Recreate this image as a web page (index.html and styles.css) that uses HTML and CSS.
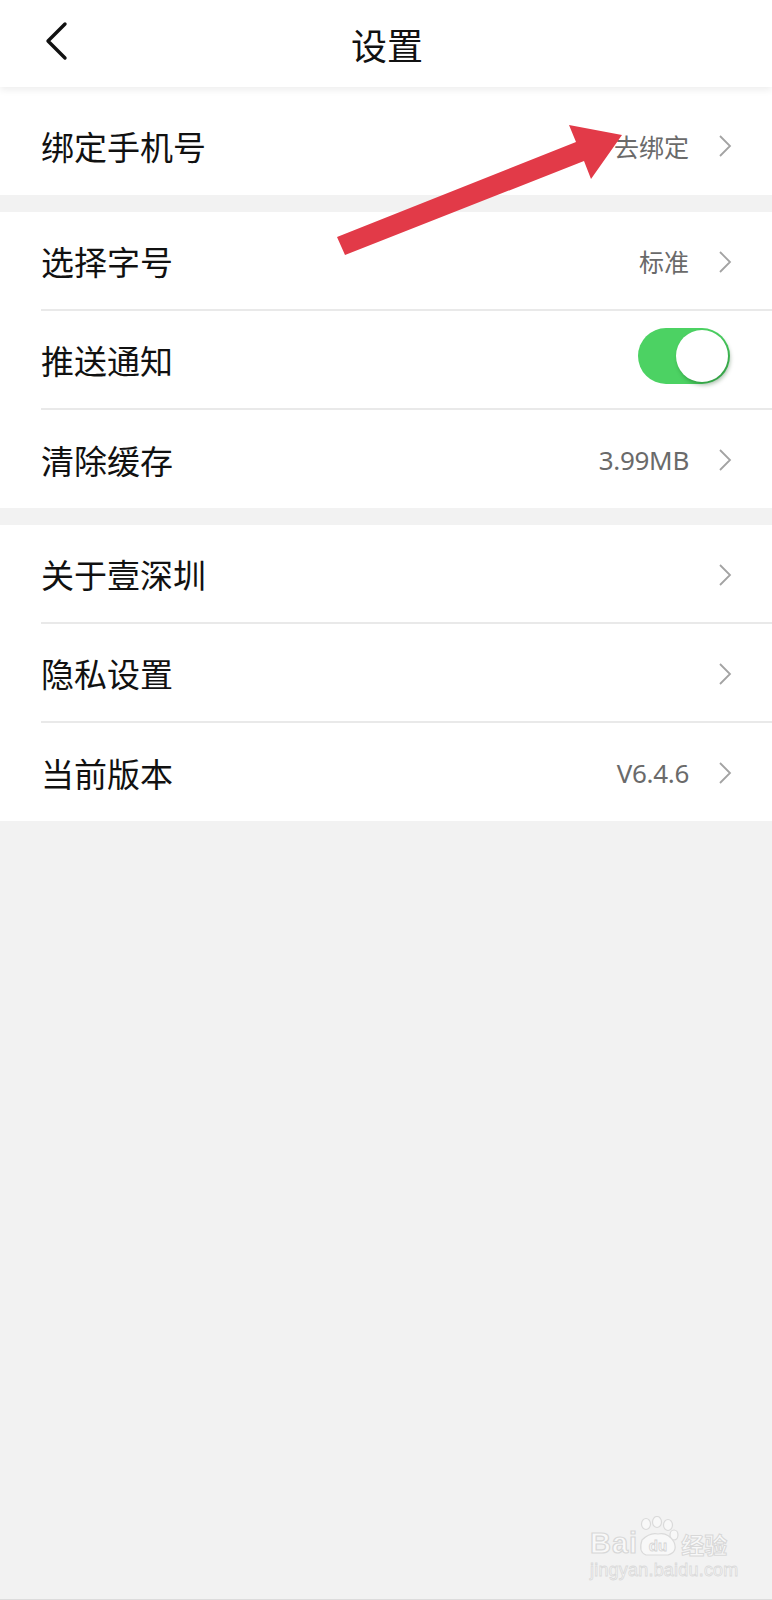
FILE: index.html
```html
<!DOCTYPE html>
<html lang="zh">
<head>
<meta charset="utf-8">
<title>设置</title>
<link rel="stylesheet" href="styles.css">
</head>
<body>
<div class="page">
  <header class="topbar">
    <span class="back">
      <svg width="26" height="40" viewBox="0 0 26 40"><polyline points="22,3 5,20 22,37" fill="none" stroke="#111" stroke-width="3.4" stroke-linecap="round" stroke-linejoin="round"/></svg>
    </span>
    <h1 class="title">设置</h1>
  </header>

  <section class="group">
    <div class="row row-first">
      <span class="label">绑定手机号</span>
      <span class="right"><span class="value">去绑定</span><svg class="chev" width="14" height="24" viewBox="0 0 14 24"><polyline points="2,2 12,12 2,22" fill="none" stroke="#a3a3a3" stroke-width="1.8"/></svg></span>
    </div>
  </section>

  <section class="group">
    <div class="row">
      <span class="label">选择字号</span>
      <span class="right"><span class="value">标准</span><svg class="chev" width="14" height="24" viewBox="0 0 14 24"><polyline points="2,2 12,12 2,22" fill="none" stroke="#a3a3a3" stroke-width="1.8"/></svg></span>
    </div>
    <div class="row">
      <span class="label">推送通知</span>
      <span class="toggle"><span class="knob"></span></span>
    </div>
    <div class="row">
      <span class="label">清除缓存</span>
      <span class="right"><span class="value num">3.99MB</span><svg class="chev" width="14" height="24" viewBox="0 0 14 24"><polyline points="2,2 12,12 2,22" fill="none" stroke="#a3a3a3" stroke-width="1.8"/></svg></span>
    </div>
  </section>

  <section class="group">
    <div class="row">
      <span class="label">关于壹深圳</span>
      <span class="right"><svg class="chev" width="14" height="24" viewBox="0 0 14 24"><polyline points="2,2 12,12 2,22" fill="none" stroke="#a3a3a3" stroke-width="1.8"/></svg></span>
    </div>
    <div class="row">
      <span class="label">隐私设置</span>
      <span class="right"><svg class="chev" width="14" height="24" viewBox="0 0 14 24"><polyline points="2,2 12,12 2,22" fill="none" stroke="#a3a3a3" stroke-width="1.8"/></svg></span>
    </div>
    <div class="row">
      <span class="label">当前版本</span>
      <span class="right"><span class="value num">V6.4.6</span><svg class="chev" width="14" height="24" viewBox="0 0 14 24"><polyline points="2,2 12,12 2,22" fill="none" stroke="#a3a3a3" stroke-width="1.8"/></svg></span>
    </div>
  </section>

  <svg class="arrow" width="772" height="300" viewBox="0 0 772 300">
    <polygon points="337,237 576,142 569,125 622,135 591,179 584,161 345,255" fill="#e23a48"/>
  </svg>

  <div class="watermark">
    <div class="wm-top">
      <span class="wm-bai">Bai</span>
      <svg class="wm-paw" width="44" height="42" viewBox="0 0 44 42">
        <g fill="#f8f8f8" stroke="#dadada" stroke-width="1.2">
          <ellipse cx="10" cy="8" rx="4.5" ry="5.5"/>
          <ellipse cx="21" cy="6" rx="4.5" ry="5.5"/>
          <ellipse cx="32" cy="9" rx="4.5" ry="5.5"/>
          <ellipse cx="38" cy="19" rx="4" ry="5"/>
          <path d="M6 24 Q14 16 22 18 Q32 16 38 26 Q42 36 32 39 L10 39 Q2 36 6 24 Z"/>
        </g>
        <text x="22" y="35" text-anchor="middle" class="wm-du">du</text>
      </svg>
      <span class="wm-jy">经验</span>
    </div>
    <div class="wm-url">jingyan.baidu.com</div>
  </div>
  <div class="bottom-line"></div>
</div>
</body>
</html>
```

FILE: styles.css
```css
* { box-sizing: border-box; }
html, body {
  margin: 0;
  padding: 0;
}
body {
  background: #f2f2f2;
  font-family: "Noto Sans CJK SC", "Noto Sans", sans-serif;
  color: #111;
}
.page {
  position: relative;
  width: 772px;
  height: 1600px;
  background: #f2f2f2;
  overflow: hidden;
}
.topbar {
  position: relative;
  z-index: 2;
  height: 87px;
  background: #fff;
  display: flex;
  align-items: center;
  justify-content: center;
  box-shadow: 0 3px 7px rgba(0, 0, 0, 0.07);
}
.back {
  position: absolute;
  left: 43px;
  top: 21px;
  display: flex;
}
.title {
  margin: 0;
  font-size: 36px;
  font-weight: 400;
  line-height: 1;
  color: #111;
  padding-top: 1px;
  padding-left: 2px;
}
.group {
  background: #fff;
  margin-bottom: 17px;
}
.row {
  height: 99px;
  margin-left: 41px;
  padding-right: 40px;
  display: flex;
  align-items: center;
  justify-content: space-between;
  border-bottom: 2px solid #e9e9e9;
  padding-top: 2px;
}
.row:last-child {
  border-bottom: none;
  height: 98px;
}
.row-first {
  height: 108px !important;
  padding-top: 10px;
}
.label {
  font-size: 33px;
  line-height: 1;
  color: #111;
}
.right {
  display: flex;
  align-items: center;
  gap: 29px;
}
.value {
  font-size: 25px;
  color: #6a6a6a;
  line-height: 1;
}
.value.num {
  font-family: "Noto Sans", "Noto Sans CJK SC", sans-serif;
  font-size: 26px;
  letter-spacing: -0.3px;
}
.chev {
  display: block;
}
.toggle {
  position: relative;
  width: 92px;
  height: 56px;
  border-radius: 28px;
  background: #4cd263;
  margin-right: 2px;
  margin-bottom: 9px;
}
.knob {
  position: absolute;
  right: 2px;
  top: 2px;
  width: 52px;
  height: 52px;
  border-radius: 50%;
  background: #fff;
  box-shadow: 2px 3px 4px rgba(0, 60, 10, 0.35);
}
.arrow {
  position: absolute;
  left: 0;
  top: 0;
  z-index: 3;
}
.watermark {
  position: absolute;
  left: 590px;
  top: 1514px;
  font-family: "Liberation Sans", "Noto Sans CJK SC", sans-serif;
}
.wm-top {
  display: flex;
  align-items: flex-end;
  height: 44px;
}
.wm-bai {
  font-size: 29px;
  font-weight: bold;
  color: #f8f8f8;
  -webkit-text-stroke: 1.2px #d8d8d8;
  line-height: 1;
  letter-spacing: 1px;
}
.wm-paw {
  display: block;
  margin-left: -2px;
}
.wm-du {
  font-family: "Liberation Sans", sans-serif;
  font-size: 15px;
  font-weight: bold;
  fill: #f8f8f8;
  stroke: #d4d4d4;
  stroke-width: 0.8px;
}
.wm-jy {
  font-family: "Noto Sans CJK SC", sans-serif;
  font-size: 23px;
  font-weight: bold;
  color: #f8f8f8;
  -webkit-text-stroke: 1px #d8d8d8;
  line-height: 1;
  margin-left: 1px;
  padding-bottom: 2px;
}
.wm-url {
  font-size: 18px;
  color: #f8f8f8;
  -webkit-text-stroke: 0.8px #dadada;
  margin-top: 2px;
  letter-spacing: 0.2px;
}
.bottom-line {
  position: absolute;
  left: 0;
  right: 0;
  bottom: 0;
  height: 1px;
  background: #dcdcdc;
}
```
